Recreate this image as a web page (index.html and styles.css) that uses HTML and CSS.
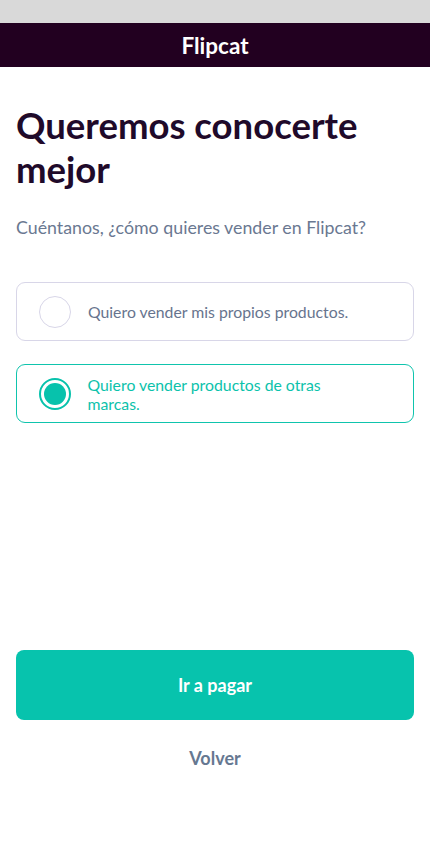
FILE: index.html
```html
<!DOCTYPE html>
<html lang="es">
<head>
<meta charset="utf-8">
<meta name="viewport" content="width=device-width, initial-scale=1">
<title>Flipcat</title>
<link rel="stylesheet" href="styles.css">
</head>
<body>
<div class="page">
  <div class="statusbar"></div>
  <header class="topbar">Flipcat</header>
  <main class="content">
    <h1 class="title">Queremos conocerte mejor</h1>
    <p class="subtitle">Cuéntanos, ¿cómo quieres vender en Flipcat?</p>
    <div class="options">
      <label class="option">
        <span class="radio"></span>
        <span class="option-text">Quiero vender mis propios productos.</span>
      </label>
      <label class="option option-selected">
        <span class="radio radio-on"><span class="radio-dot"></span></span>
        <span class="option-text">Quiero vender productos de otras marcas.</span>
      </label>
    </div>
  </main>
  <footer class="actions">
    <button class="btn-primary">Ir a pagar</button>
    <button class="btn-link">Volver</button>
  </footer>
</div>
</body>
</html>
```
FILE: styles.css
```css
* { box-sizing: border-box; }
html, body { margin: 0; padding: 0; background: #fff; }
body { font-family: Lato, "Open Sans", sans-serif; }
.page { width: 430px; height: 858px; display: flex; flex-direction: column; }
.statusbar { height: 23px; background: #d9d9d9; flex: none; }
.topbar {
  height: 44px; flex: none;
  background: #220020; color: #fff;
  display: flex; align-items: center; justify-content: center;
  font-size: 22.5px; font-weight: 700;
}
.content { padding: 36px 16px 0; flex: 1; }
.title {
  margin: 0; font-size: 36.5px; line-height: 44px; font-weight: 700;
  color: #1f0a2a;
}
.subtitle {
  margin: 24px 0 0; font-size: 17.8px; line-height: 24px; color: #6a7891;
}
.options { margin-top: 43px; display: flex; flex-direction: column; gap: 23px; }
.option {
  height: 59px; border: 1px solid #d8d6e8; border-radius: 9px;
  display: flex; align-items: center; gap: 17px; padding: 0 22px;
}
.option-text { font-size: 15.8px; line-height: 19px; color: #67748e; }
.radio {
  width: 32px; height: 32px; border-radius: 50%; flex: none;
  border: 1px solid #d8d6e8; background: #fff;
  display: flex; align-items: center; justify-content: center;
}
.option-selected { border: 1.5px solid #0fc4ad; padding: 0 21.5px; }
.option-selected .option-text { color: #0cc2ab; padding-right: 70px; }
.radio-on { border: 2.5px solid #07c2ac; }
.radio-dot { width: 22px; height: 22px; border-radius: 50%; background: #07c2ac; }
.actions { padding: 0 16px 85px; display: flex; flex-direction: column; align-items: center; }
.btn-primary {
  width: 100%; height: 70px; border: 0; border-radius: 8px;
  background: #07c3ad; color: #fff; font-family: inherit;
  font-size: 18px; font-weight: 700;
}
.btn-link {
  margin-top: 23px; border: 0; background: none; font-family: inherit;
  font-size: 18px; font-weight: 700; color: #667891; padding: 4px 8px;
}
```
